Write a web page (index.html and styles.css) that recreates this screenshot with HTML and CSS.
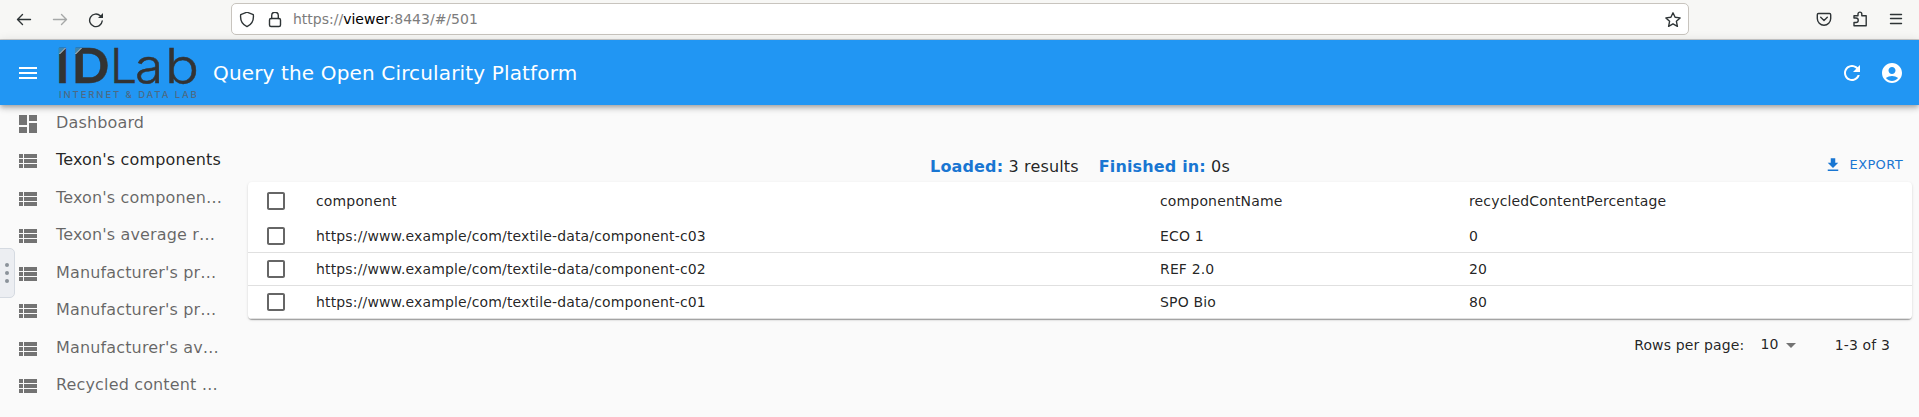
FILE: index.html
```html
<!DOCTYPE html>
<html lang="en">
<head>
<meta charset="utf-8">
<title>Query the Open Circularity Platform</title>
<link rel="stylesheet" href="styles.css">
</head>
<body>
<svg class="defs" width="0" height="0" aria-hidden="true">
  <symbol id="list" viewBox="0 0 24 24"><path d="M3 14h4v-4H3v4zm0 5h4v-4H3v4zM3 9h4V5H3v4zm5 5h13v-4H8v4zm0 5h13v-4H8v4zM8 5v4h13V5H8z"/></symbol>
  <symbol id="box" viewBox="0 0 24 24"><path d="M19 5v14H5V5h14m0-2H5c-1.1 0-2 .9-2 2v14c0 1.1.9 2 2 2h14c1.1 0 2-.9 2-2V5c0-1.1-.9-2-2-2z"/></symbol>
</svg>

<header class="browser">
  <nav class="browser-nav">
    <svg class="line" width="16" height="16" viewBox="0 0 16 16"><path d="M14.500 7.500H1.500M6.500 2.500l-5 5 5 5"/></svg>
    <svg class="line off" width="16" height="16" viewBox="0 0 16 16"><path d="M1.500 7.500h13M9.500 2.500l5 5-5 5"/></svg>
    <svg class="line" width="16" height="16" viewBox="0 0 16 16"><path d="M14.200 9A6.300 6.300 0 1 1 12.300 3.800"/><path class="solid" d="M15 1v5H10z"/></svg>
  </nav>
  <div class="urlbar">
    <svg class="line" width="16" height="16" viewBox="0 0 16 16"><path d="M8 .2L14.300 2.600c.7 5.800-1.300 9.800-6.300 12C3 12.400 1 8.400 1.700 2.600z"/></svg>
    <svg class="line lock" width="16" height="16" viewBox="0 0 16 16"><rect x="2.500" y="6.500" width="11" height="8" rx="1.500"/><path d="M4.700 6.500V3.500a3.300 3.300 0 0 1 6.600 0v3"/></svg>
    <span class="url">https://<b>viewer</b>:8443/#/501</span>
    <svg class="line star" width="16" height="16" viewBox="0 0 16 16"><path d="M8 .8l2.100 4.500 5 .6-3.700 3.400 1 5L8 11.800l-4.400 2.500 1-5L.9 5.900l5-.6z"/></svg>
  </div>
  <div class="browser-tools">
    <svg class="line" width="16" height="16" viewBox="0 0 16 16"><path d="M2.500 2.500h11c.7 0 1.200.5 1.200 1.200V7.500a6.700 6.700 0 0 1-13.400 0V3.700c0-.7.5-1.200 1.200-1.200z"/><path d="M4.700 6.300L8 9.400l3.300-3.100"/></svg>
    <svg class="line" width="16" height="16" viewBox="0 0 16 16"><path d="M2 7V4.700h4V3a1.900 1.900 0 0 1 3.800 0v1.700h4.400v10H2V11.500h2a2.100 2.100 0 0 0 0-4.500z"/></svg>
    <svg class="line" width="16" height="16" viewBox="0 0 16 16"><path d="M2.500 3.500h11M2.500 7.500h11M2.500 12.500h11"/></svg>
  </div>
</header>

<div class="appbar">
  <svg class="icon" viewBox="0 0 24 24"><path d="M3 18h18v-2H3v2zm0-5h18v-2H3v2zm0-7v2h18V6H3z"/></svg>
  <svg class="logo" width="142" height="56" viewBox="0 0 142 56" role="img" aria-label="IDLab">
    <text class="logo-name" y="38"><tspan class="heavy" x="-2">I</tspan><tspan class="heavy" x="14" textLength="38" lengthAdjust="spacingAndGlyphs">D</tspan><tspan x="52">L</tspan><tspan x="77" textLength="28" lengthAdjust="spacingAndGlyphs">a</tspan><tspan x="107" textLength="34" lengthAdjust="spacingAndGlyphs">b</tspan></text>
    <path class="logo-corner" d="M1 3h6L1 9zM17 3h6l-6 6z"/>
    <path class="logo-edge" d="M1.500 9L7.500 3M17.500 9L23.500 3"/>
    <text class="logo-sub" x="1" y="53" textLength="138">INTERNET &amp; DATA LAB</text>
  </svg>
  <h1 class="title">Query the Open Circularity Platform</h1>
  <svg class="icon refresh" viewBox="0 0 24 24"><path d="M17.650 6.350C16.200 4.900 14.210 4 12 4c-4.420 0-7.990 3.580-7.990 8s3.570 8 7.990 8c3.730 0 6.840-2.550 7.730-6h-2.080c-.82 2.330-3.040 4-5.650 4-3.310 0-6-2.690-6-6s2.690-6 6-6c1.660 0 3.140.69 4.220 1.780L13 11h7V4l-2.350 2.350z"/></svg>
  <svg class="icon" viewBox="0 0 24 24"><path d="M12 2C6.480 2 2 6.480 2 12s4.480 10 10 10 10-4.480 10-10S17.520 2 12 2zm0 4c1.930 0 3.500 1.570 3.500 3.500S13.930 13 12 13s-3.500-1.570-3.500-3.500S10.070 6 12 6zm0 14c-2.030 0-4.430-.82-6.140-2.880C7.550 15.800 9.680 15 12 15s4.450.8 6.140 2.120C16.430 19.180 14.030 20 12 20z"/></svg>
</div>

<div class="layout">
  <nav class="menu">
    <a class="item"><svg class="icon" viewBox="0 0 24 24"><path d="M3 13h8V3H3v10zm0 8h8v-6H3v6zm10 0h8V11h-8v10zm0-18v6h8V3h-8z"/></svg><span>Dashboard</span></a>
    <a class="item active"><svg class="icon"><use href="#list"/></svg><span>Texon's components</span></a>
    <a class="item"><svg class="icon"><use href="#list"/></svg><span>Texon's componen…</span></a>
    <a class="item"><svg class="icon"><use href="#list"/></svg><span>Texon's average r…</span></a>
    <a class="item"><svg class="icon"><use href="#list"/></svg><span>Manufacturer's pr…</span></a>
    <a class="item"><svg class="icon"><use href="#list"/></svg><span>Manufacturer's pr…</span></a>
    <a class="item"><svg class="icon"><use href="#list"/></svg><span>Manufacturer's av…</span></a>
    <a class="item"><svg class="icon"><use href="#list"/></svg><span>Recycled content …</span></a>
  </nav>
  <div class="handle"><i></i><i></i><i></i></div>

  <main class="content">
    <div class="actions">
      <div class="status"><span><b>Loaded:</b> 3 results</span><span><b>Finished in:</b> 0s</span></div>
      <div class="export"><svg class="icon" viewBox="0 0 24 24"><path d="M19 9h-4V3H9v6H5l7 7 7-7zM5 18v2h14v-2H5z"/></svg>EXPORT</div>
    </div>
    <div class="table">
      <div class="row head"><svg class="icon"><use href="#box"/></svg><span>component</span><span>componentName</span><span>recycledContentPercentage</span></div>
      <div class="row"><svg class="icon"><use href="#box"/></svg><span>https://www.example/com/textile-data/component-c03</span><span>ECO 1</span><span>0</span></div>
      <div class="row"><svg class="icon"><use href="#box"/></svg><span>https://www.example/com/textile-data/component-c02</span><span>REF 2.0</span><span>20</span></div>
      <div class="row"><svg class="icon"><use href="#box"/></svg><span>https://www.example/com/textile-data/component-c01</span><span>SPO Bio</span><span>80</span></div>
    </div>
    <div class="pager">
      <span>Rows per page:</span>
      <span class="size">10</span>
      <svg class="icon" viewBox="0 0 24 24"><path d="M7 10l5 5 5-5z"/></svg>
      <span class="range">1-3 of 3</span>
    </div>
  </main>
</div>
</body>
</html>
```
FILE: styles.css
```css
* { box-sizing: border-box; }
body {
  margin: 0;
  height: 417px;
  overflow: hidden;
  background: #fafafa;
  color: rgba(0, 0, 0, .87);
  font: 14px/20px "DejaVu Sans", sans-serif;
  letter-spacing: .01071em;
}
.defs { position: absolute; }
svg { flex: none; display: block; }
.icon { width: 24px; height: 24px; fill: currentColor; }

/* Browser toolbar */
.browser {
  display: flex;
  height: 40px;
  border-bottom: 1px solid #ccc;
  background: #f7f7f5;
  letter-spacing: 0;
}
.line { fill: none; stroke: #2e3436; stroke-width: 1.4; stroke-linejoin: round; stroke-linecap: round; }
.line .solid { fill: #2e3436; stroke: none; }
.off { opacity: .4; }
.browser-nav { display: flex; width: 231px; padding: 12px 0 0 16px; gap: 20px; }
.urlbar {
  display: flex;
  width: 1458px;
  height: 32px;
  margin-top: 3px;
  padding: 8px 7px 0 7px;
  border: 1px solid #c8c4be;
  border-radius: 5px;
  background: #fff;
}
.lock { margin-left: 12px; }
.url { margin: -3px 0 0 10px; font-size: 14px; color: #7c7c7c; }
.url b { font-weight: 400; color: #000; }
.star { margin-left: auto; }
.browser-tools { display: flex; gap: 20px; padding: 11px 0 0 127px; }

/* Application bar */
.appbar {
  position: relative;
  display: flex;
  align-items: center;
  height: 65px;
  padding: 0 15px 0 16px;
  background: #2196f3;
  color: #fff;
  box-shadow: 0 2px 4px -1px rgba(0,0,0,.2), 0 4px 5px rgba(0,0,0,.14), 0 1px 10px rgba(0,0,0,.12);
}
.logo { margin: 0 13px 0 18px; overflow: visible; }
.logo-name { font: 300 48px Inter, sans-serif; fill: #333; stroke: #333; stroke-width: .5; letter-spacing: 0; }
.logo-name .heavy { font-weight: 600; }
.logo-corner { fill: #3f86b0; }
.logo-edge { stroke: #cfe3ee; stroke-width: 1; }
.logo-sub { font: 500 9.500px Inter, sans-serif; fill: #4c6a85; }
.title { margin: 0; font-size: 20px; font-weight: 400; line-height: 32px; letter-spacing: .0075em; }
.refresh { margin: 0 16px 0 auto; }

.layout { position: relative; display: flex; }
.menu { width: 240px; }
.item {
  display: flex;
  align-items: center;
  height: 37.500px;
  padding-left: 16px;
  gap: 16px;
  color: rgba(0, 0, 0, .6);
  font-size: 16px;
  letter-spacing: .00938em;
  white-space: nowrap;
}
.item .icon { color: rgba(0, 0, 0, .54); }
.item span { margin-top: -2px; }
.active { color: rgba(0, 0, 0, .87); }

/* Drag handle lying over the menu edge */
.handle {
  position: absolute;
  left: -1px;
  top: 143px;
  display: flex;
  flex-direction: column;
  align-items: center;
  justify-content: center;
  gap: 4px;
  width: 16px;
  height: 50px;
  border: 1px solid #d5dae1;
  border-radius: 0 5px 5px 0;
  background: #eceef2;
}
.handle i { width: 4px; height: 4px; border-radius: 50%; background: #8b929a; }

/* Results */
.content { width: 1664px; margin-left: 8px; }
.actions { display: flex; justify-content: center; position: relative; height: 77px; padding-top: 52px; }
.status { display: flex; gap: 20px; font-size: 16px; letter-spacing: .00938em; }
.status b { color: #1976d2; }
.export {
  position: absolute;
  right: 9px;
  top: 50px;
  display: flex;
  gap: 8px;
  align-items: center;
  color: #1976d2;
  font-size: 13px;
  letter-spacing: .02857em;
}
.export .icon { width: 18px; height: 18px; }
.table {
  border-radius: 4px;
  background: #fff;
  overflow: hidden;
  box-shadow: 0 2px 1px -1px rgba(0,0,0,.2), 0 1px 1px rgba(0,0,0,.14), 0 1px 3px rgba(0,0,0,.12);
}
.row {
  display: grid;
  grid-template-columns: 52px 844px 309px 1fr;
  align-items: center;
  height: 33px;
  padding-left: 16px;
  border-bottom: 1px solid #e0e0e0;
}
.row .icon { color: rgba(0, 0, 0, .6); }
.head { height: 38px; border: 0; }
.pager { display: flex; align-items: center; justify-content: flex-end; padding: 14px 22px 0 0; }
.pager .size { margin: -2px 0 0 16px; }
.pager .icon { color: rgba(0, 0, 0, .54); }
.pager .range { margin-left: 32px; }
```
